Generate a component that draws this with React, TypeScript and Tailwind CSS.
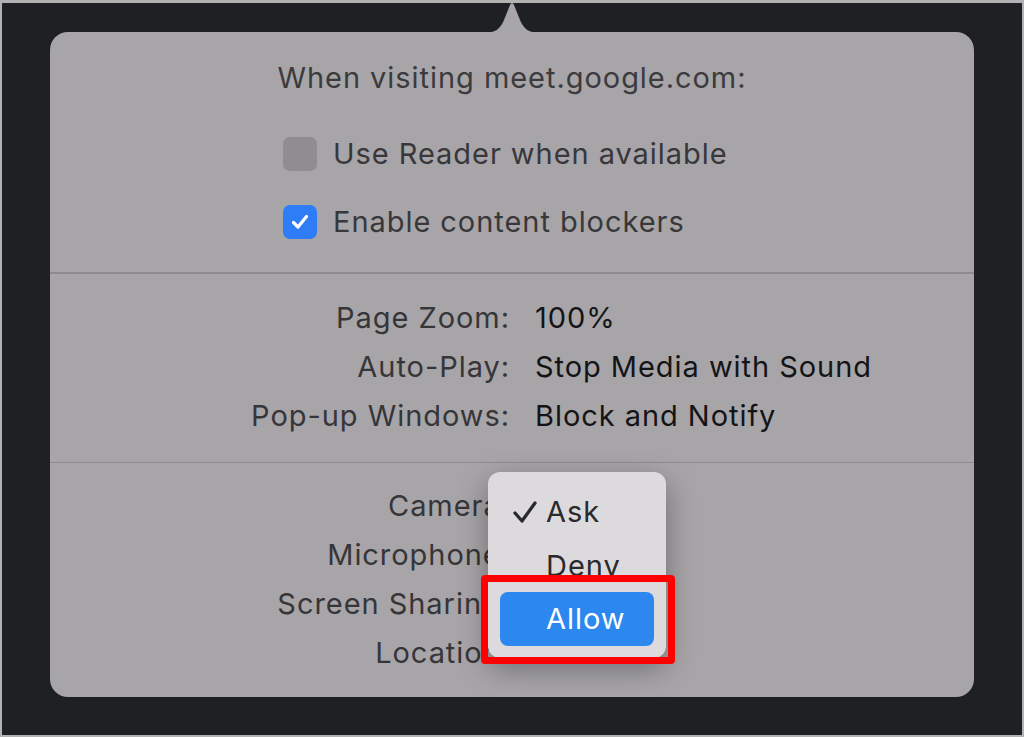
import React from "react";

const font = { fontFamily: "Inter, 'Noto Sans', sans-serif" };

function Checkbox({ checked }: { checked: boolean }) {
  if (checked) {
    return (
      <div className="w-[34px] h-[34px] rounded-[7px] bg-[#2f7df6] flex items-center justify-center">
        <svg width="22" height="22" viewBox="0 0 22 22" fill="none">
          <path d="M4.5 11.5 L9 16 L17.5 5.5" stroke="white" strokeWidth="3.2" strokeLinecap="round" strokeLinejoin="round" />
        </svg>
      </div>
    );
  }
  return <div className="w-[34px] h-[34px] rounded-[7px] bg-[#8f8d90]" />;
}

function Row({ label, value }: { label: string; value?: string }) {
  return (
    <div className="grid grid-cols-[460px_1fr] gap-x-[25px] h-[49px] items-center text-[29px] leading-[34px] tracking-[0.95px]">
      <div className="text-right text-[#363538] whitespace-nowrap">{label}</div>
      <div className="text-[#141416] whitespace-nowrap">{value ?? ""}</div>
    </div>
  );
}

export default function App() {
  return (
    <div style={font} className="w-[1024px] h-[737px] bg-[#b2b2b2] p-[2px] pt-[3px]">
      <div className="w-full h-full bg-[#1f2024] pl-[48px] pt-[29px]">
        <div className="relative w-[924px] h-[665px] rounded-[18px] bg-[#a7a5a8]">
          {/* arrow */}
          <svg className="absolute left-[432px] top-[-30px]" width="60" height="31" viewBox="0 0 60 31">
            <path d="M0 31 C 14 31, 18 27, 22 18 L 28 3 Q 30 -1 32 3 L 38 18 C 42 27, 46 31, 60 31 Z" fill="#a7a5a8" />
          </svg>
          <div className="absolute left-[798px] top-[12px] w-[22px] h-[36px] bg-[#a9a6a9]" />

          <div className="flex flex-col pt-[29px]">
            <div className="h-[34px] text-center text-[29px] leading-[34px] tracking-[0.95px] text-[#3b3a3d]">
              When visiting meet.google.com:
            </div>
            <div className="flex flex-col gap-[34px] pl-[233px] mt-[42px] mb-[33px]">
              <div className="flex items-center gap-[16px] h-[34px]">
                <Checkbox checked={false} />
                <span className="text-[29px] leading-[34px] tracking-[0.95px] text-[#38373a]">Use Reader when available</span>
              </div>
              <div className="flex items-center gap-[16px] h-[34px]">
                <Checkbox checked={true} />
                <span className="text-[29px] leading-[34px] tracking-[0.95px] text-[#38373a]">Enable content blockers</span>
              </div>
            </div>
            <div className="h-[1.5px] bg-[#8d8b8e]" />
            <div className="flex flex-col pt-[20px] pb-[21px]">
              <Row label="Page Zoom:" value="100%" />
              <Row label="Auto-Play:" value="Stop Media with Sound" />
              <Row label="Pop-up Windows:" value="Block and Notify" />
            </div>
            <div className="h-[1.5px] bg-[#8d8b8e]" />
            <div className="flex flex-col pt-[18px]">
              <Row label="Camera:" />
              <Row label="Microphone:" />
              <Row label="Screen Sharing:" />
              <Row label="Location:" />
            </div>
          </div>

          {/* dropdown menu */}
          <div className="absolute left-[438px] top-[440px] w-[178px] h-[186px] rounded-[12px] bg-[#dcdadc] shadow-[0_10px_30px_rgba(0,0,0,0.35)] flex flex-col pt-[22px] px-[12px] text-[29px] leading-[34px] tracking-[0.95px]">
            <div className="flex items-center h-[36px]">
              <svg className="ml-[11px] mr-[7px]" width="28" height="28" viewBox="0 0 28 28" fill="none">
                <path d="M4 15 L11 23 L24 5" stroke="#2a2a2c" strokeWidth="3.3" strokeLinecap="round" strokeLinejoin="round" />
              </svg>
              <span className="text-[#2a2a2c]">Ask</span>
            </div>
            <div className="flex items-center h-[36px] mt-[18px] pl-[46px] text-[#2a2a2c]">Deny</div>
            <div className="flex items-center h-[54px] mt-[8px] rounded-[8px] bg-[#2c87ee] pl-[46px] text-white">Allow</div>
          </div>

          {/* red highlight box */}
          <div className="absolute left-[431px] top-[543px] w-[194px] h-[89px] border-[7px] border-[#ff0000] rounded-[4px]" />
        </div>
      </div>
    </div>
  );
}
